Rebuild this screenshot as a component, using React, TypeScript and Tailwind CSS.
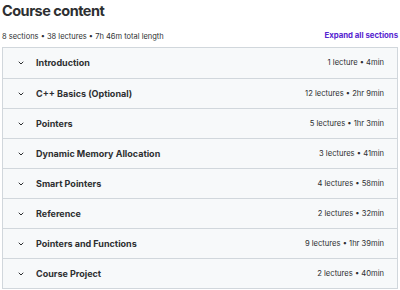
import React from "react";

const sections = [
  ["Introduction", "1 lecture • 4min"],
  ["C++ Basics (Optional)", "12 lectures • 2hr 9min"],
  ["Pointers", "5 lectures • 1hr 3min"],
  ["Dynamic Memory Allocation", "3 lectures • 41min"],
  ["Smart Pointers", "4 lectures • 58min"],
  ["Reference", "2 lectures • 32min"],
  ["Pointers and Functions", "9 lectures • 1hr 39min"],
  ["Course Project", "2 lectures • 40min"],
];

export default function App() {
  return (
    <div className="w-[400px] h-[290px] bg-white text-[#2d2f31] overflow-hidden" style={{ fontFamily: "Inter, 'Noto Sans', sans-serif" }}>
      <div className="px-[2px]">
        <h2 className="text-[14.5px] font-bold leading-[20px] pt-[1px] tracking-[-0.5px]">Course content</h2>
        <div className="flex items-end justify-between mt-[10px] h-[11px]">
          <span className="text-[7.5px] text-[#2d2f31]">8 sections • 38 lectures • 7h 46m total length</span>
          <span className="text-[7.8px] font-bold text-[#5624d0]">Expand all sections</span>
        </div>
        <div className="mt-[5px] border border-[#d1d7dc]">
          {sections.map(([title, meta], i) => (
            <div key={i} className={`flex items-center h-[30px] bg-[#f7f9fa] pl-[14px] pr-[13px] ${i > 0 ? "border-t border-[#d1d7dc]" : ""}`}>
              <svg width="8" height="8" viewBox="0 0 24 24" fill="none" stroke="#2d2f31" strokeWidth="3" strokeLinecap="round" strokeLinejoin="round" className="mr-[11px]">
                <path d="M6 9l6 6 6-6" />
              </svg>
              <span className="text-[9px] font-bold flex-1">{title}</span>
              <span className="text-[7.6px] text-[#2d2f31]">{meta}</span>
            </div>
          ))}
        </div>
      </div>
    </div>
  );
}
